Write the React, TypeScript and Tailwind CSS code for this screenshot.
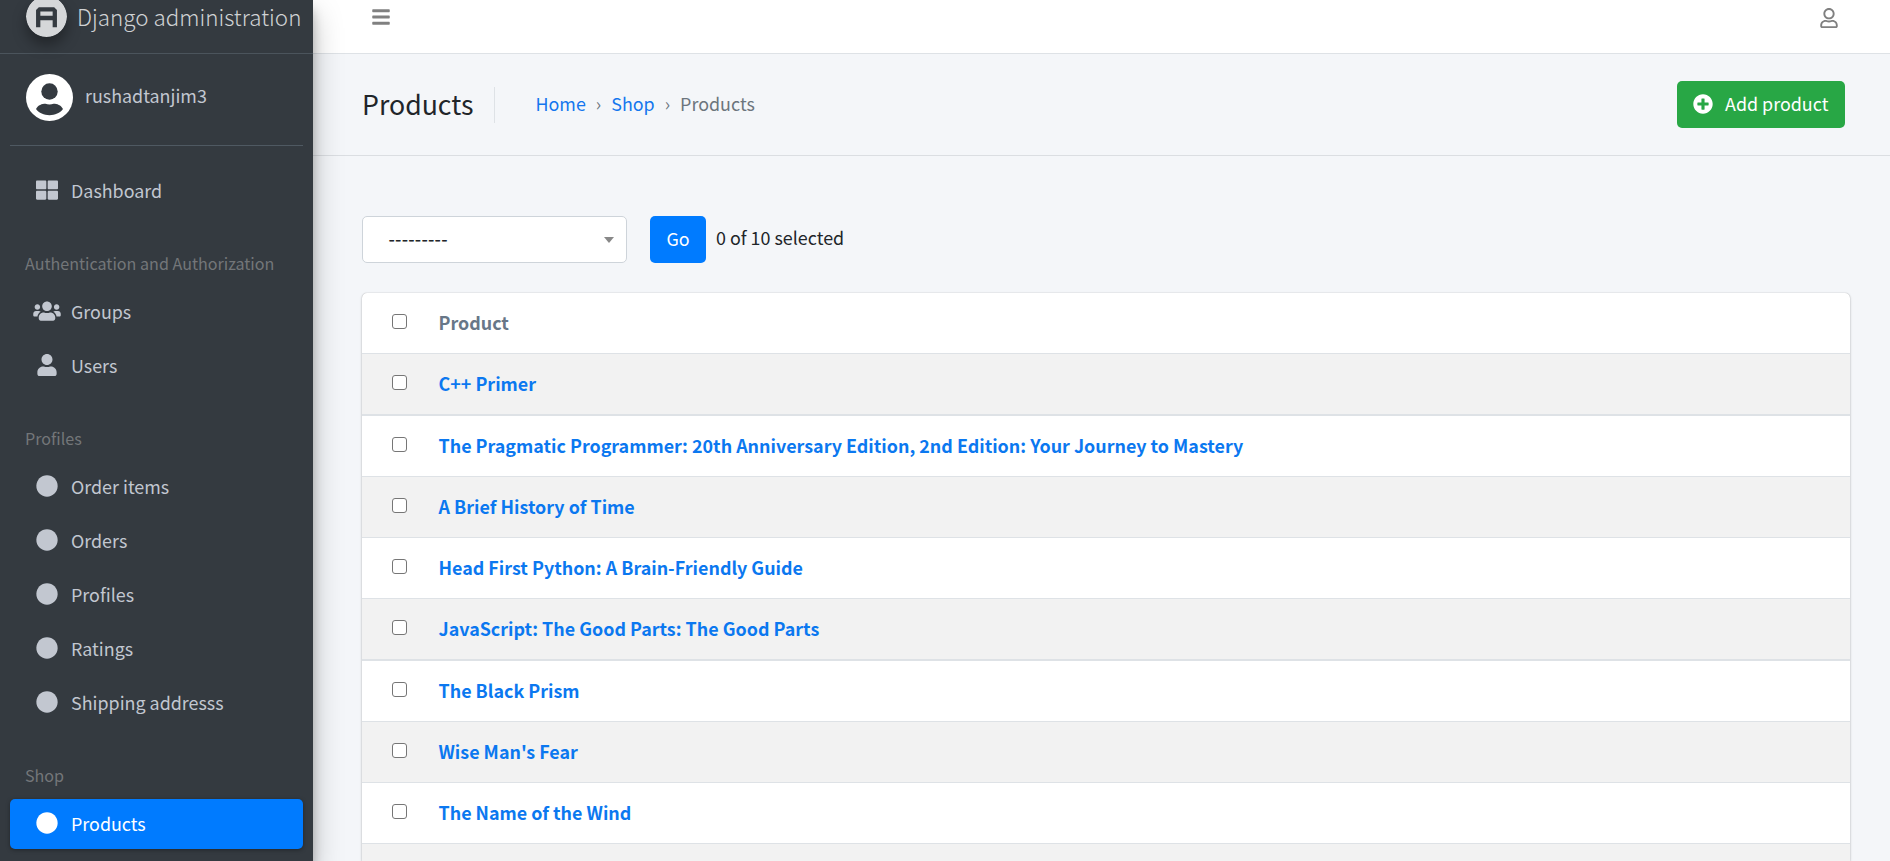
import type { ReactNode } from "react";
import { FaBars, FaCircle, FaPlusCircle, FaRegUser, FaThLarge, FaUser, FaUsers } from "react-icons/fa";

const products = [
  "C++ Primer",
  "The Pragmatic Programmer: 20th Anniversary Edition, 2nd Edition: Your Journey to Mastery",
  "A Brief History of Time",
  "Head First Python: A Brain-Friendly Guide",
  "JavaScript: The Good Parts: The Good Parts",
  "The Black Prism",
  "Wise Man's Fear",
  "The Name of the Wind",
];

function Checkbox() {
  return <span className="block size-[15px] rounded-[3px] border border-[#767676] bg-white" />;
}

function NavItem({ icon, label, active = false }: { icon: ReactNode; label: string; active?: boolean }) {
  return (
    <a
      className={
        active
          ? "mx-2.5 mb-1 flex h-[50px] items-center rounded-[5px] bg-[#007bff] text-white shadow-[0_1px_4px_rgba(0,0,0,0.35)]"
          : "mx-2.5 mb-1 flex h-[50px] items-center text-[#c2c7d0]"
      }
    >
      <span className="ml-[21px] flex w-8 justify-center pb-0.5 text-[22px]">{icon}</span>
      <span className="mb-0.5 ml-2 whitespace-nowrap text-[17.9px] leading-[30px]">{label}</span>
    </a>
  );
}

function NavHeader({ label }: { label: string }) {
  return (
    <div className="flex h-[67px] items-start pl-[25px] pt-[29px] text-[16.1px] leading-[28px] text-[#737679]">{label}</div>
  );
}

function Logo() {
  return (
    <svg viewBox="0 0 41 41" className="-mt-1 size-[41px] shrink-0 rounded-full shadow-[0_8px_14px_rgba(0,0,0,0.35)]">
      <circle cx="20.5" cy="20.5" r="20.5" fill="#d5d7d9" />
      <path d="M12.200 31.300V14.800l1.500-1.500h13.600l1.500 1.500v16.500M12.200 22h16.600" fill="none" stroke="#343a40" strokeWidth="4.300" />
    </svg>
  );
}

function Avatar() {
  return (
    <svg viewBox="0 0 47 47" className="size-[47px] shrink-0">
      <circle cx="23.5" cy="23.5" r="23.5" fill="#fff" />
      <circle cx="23.5" cy="17.500" r="8.200" fill="#343a40" />
      <path d="M10 35c2-4 6-5.300 9.500-5.300 2.300 1.100 5.700 1.100 8 0 3.500 0 7.500 1.300 9.500 5.300-3 4-8 6.200-13.500 6.200S13 39 10 35z" fill="#343a40" />
    </svg>
  );
}

function Sidebar() {
  return (
    <aside className="relative z-10 h-[861px] w-[313px] shrink-0 bg-[#343a40] shadow-[0_14px_28px_rgba(0,0,0,0.25),0_10px_10px_rgba(0,0,0,0.22)]">
      <div className="flex h-[54px] items-start border-b border-[#4b545c] pl-[26px]">
        <Logo />
        <span className="-mt-0.5 ml-[10px] whitespace-nowrap text-[22.4px] font-light leading-9 text-[#d0d2d4]">Django administration</span>
      </div>
      <div className="mx-2.5 flex h-[92px] border-b border-[#4f5962] pl-4 pt-5">
        <Avatar />
        <span className="ml-3 mt-1.5 text-[17.9px] leading-[30px] text-[#c2c7d0]">rushadtanjim3</span>
      </div>
      <nav className="pt-5">
        <NavItem icon={<FaThLarge />} label="Dashboard" />
        <NavHeader label="Authentication and Authorization" />
        <NavItem icon={<FaUsers className="w-7" />} label="Groups" />
        <NavItem icon={<FaUser />} label="Users" />
        <NavHeader label="Profiles" />
        <NavItem icon={<FaCircle />} label="Order items" />
        <NavItem icon={<FaCircle />} label="Orders" />
        <NavItem icon={<FaCircle />} label="Profiles" />
        <NavItem icon={<FaCircle />} label="Ratings" />
        <NavItem icon={<FaCircle />} label="Shipping addresss" />
        <NavHeader label="Shop" />
        <NavItem icon={<FaCircle />} label="Products" active />
      </nav>
    </aside>
  );
}

function ProductRow({ name, index }: { name: string; index: number }) {
  const thick = index === 1 || index === 5;
  const shade = index % 2 === 0 ? "bg-[#f2f2f2]" : "bg-white";
  return (
    <div className={`flex shrink-0 items-start border-[#dee2e6] ${shade} ${thick ? "h-[62px] border-t-2" : "h-[61px] border-t"}`}>
      <div className="ml-[30px] mt-[21px]">
        <Checkbox />
      </div>
      <a className="ml-[31.5px] mt-3.5 whitespace-nowrap text-[17.9px] font-bold leading-[30px] text-[#0b78f0]">{name}</a>
    </div>
  );
}

export default function App() {
  return (
    <div className="flex h-[861px] w-[1890px] overflow-hidden bg-[#f4f6f9] font-['Noto_Sans_CJK_SC',sans-serif] text-[#212529]">
      <Sidebar />
      <main className="flex min-w-0 flex-1 flex-col">
        <header className="flex h-[54px] shrink-0 items-start justify-between border-b border-[#dee2e6] bg-white pl-[58px] pr-[51px] pt-[7px] text-[20px] text-[#808080]">
          <FaBars />
          <FaRegUser className="mt-px" />
        </header>
        <section className="flex h-[102px] shrink-0 items-center border-b border-[#dbdee2] pl-[49px] pr-[45px]">
          <h1 className="-mt-0.5 text-[26.7px] leading-9">Products</h1>
          <div className="ml-[21px] h-9 w-px bg-[#dee2e6]" />
          <nav className="-mt-1 ml-[40px] flex items-center text-[17.9px] leading-[30px] text-[#6c757d]">
            <a className="text-[#1476ee]">Home</a>
            <span className="mx-2.5">›</span>
            <a className="text-[#1476ee]">Shop</a>
            <span className="mx-2.5">›</span>
            <span>Products</span>
          </nav>
          <button className="ml-auto flex h-[47px] w-[168px] items-center rounded-[5px] bg-[#28a745] pl-4 text-[17.9px] text-white">
            <FaPlusCircle className="mb-0.5 text-[20px]" />
            <span className="mb-0.5 ml-3 whitespace-nowrap">Add product</span>
          </button>
        </section>
        <section className="flex shrink-0 items-center pl-[49px] pt-[60px]">
          <div className="flex h-[47px] w-[265px] items-center justify-between rounded-[5px] border border-[#ced4da] bg-white pl-[25.5px] pr-3">
            <span className="mb-0.5 text-[17.9px] font-medium tracking-[0.2px]">---------</span>
            <svg viewBox="0 0 10 6" className="h-1.5 w-2.5">
              <path d="M0 0h10L5 6z" fill="#888" />
            </svg>
          </div>
          <button className="ml-[23px] h-[47px] w-[56px] rounded-[5px] bg-[#007bff] pb-0.5 text-[17.9px] text-white">Go</button>
          <span className="-mt-1 ml-2.5 text-[17.9px]">0 of 10 selected</span>
        </section>
        <section className="ml-[49px] mr-10 mt-[30px] flex flex-col overflow-hidden rounded-t-[5px] bg-white shadow-[0_0_1px_rgba(0,0,0,0.3),0_1px_3px_rgba(0,0,0,0.2)]">
          <div className="flex h-[60px] shrink-0 items-start">
            <div className="ml-[30px] mt-[21px]">
              <Checkbox />
            </div>
            <span className="ml-[31.5px] mt-3.5 text-[17.9px] font-bold leading-[30px] text-[#687788]">Product</span>
          </div>
          {products.map((name, index) => (
            <ProductRow key={name} name={name} index={index} />
          ))}
          <div className="h-[61px] shrink-0 border-t border-[#dee2e6] bg-[#f2f2f2]" />
        </section>
      </main>
    </div>
  );
}
